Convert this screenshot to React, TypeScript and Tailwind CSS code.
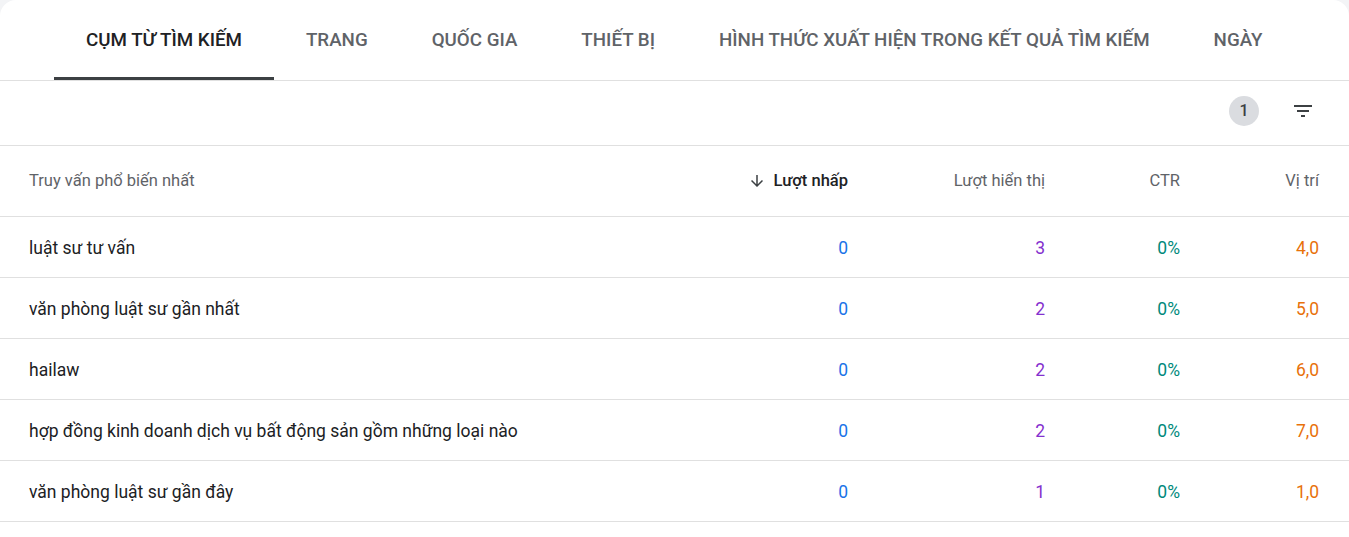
import React from "react";

const tabs = [
  "CỤM TỪ TÌM KIẾM",
  "TRANG",
  "QUỐC GIA",
  "THIẾT BỊ",
  "HÌNH THỨC XUẤT HIỆN TRONG KẾT QUẢ TÌM KIẾM",
  "NGÀY",
];

const rows = [
  ["luật sư tư vấn", "0", "3", "0%", "4,0"],
  ["văn phòng luật sư gần nhất", "0", "2", "0%", "5,0"],
  ["hailaw", "0", "2", "0%", "6,0"],
  ["hợp đồng kinh doanh dịch vụ bất động sản gồm những loại nào", "0", "2", "0%", "7,0"],
  ["văn phòng luật sư gần đây", "0", "1", "0%", "1,0"],
];

export default function App() {
  return (
    <div
      className="min-h-[537px] w-[1349px] bg-[#f3f4f6]"
      style={{ fontFamily: "Roboto, 'Noto Sans', sans-serif" }}
    >
      <div className="min-h-[537px] bg-white rounded-t-[16px]">
        <div className="flex h-[81px] border-b border-[#e0e0e0] pl-[54px]">
          {tabs.map((t, i) => (
            <div
              key={t}
              className={
                "relative flex items-center px-8 text-[18.75px] font-medium " +
                (i === 0 ? "text-[#202124]" : "text-[#5f6368]")
              }
            >
              <span>{t}</span>
              {i === 0 && (
                <div className="absolute left-0 right-0 bottom-0 h-[3px] bg-[#3c4043]" />
              )}
            </div>
          ))}
        </div>
        <div className="flex h-[65px] items-center justify-end border-b border-[#e0e0e0] pr-[34px] pb-[5px]">
          <div className="flex h-[30px] w-[30px] items-center justify-center rounded-full bg-[#dadce0] text-[16px] font-medium text-[#3c4043]">
            1
          </div>
          <div className="ml-[32px] flex h-[24px] w-[24px] items-center justify-center">
            <svg width="24" height="24" viewBox="0 0 24 24" fill="#3c4043">
              <path d="M10 18h4v-2h-4v2zM3 6v2h18V6H3zm3 7h12v-2H6v2z" />
            </svg>
          </div>
        </div>
        <div className="grid h-[71px] grid-cols-[1fr_197px_197px_135px_139px] items-center border-b border-[#e0e0e0] pl-[29px] pr-[30px] text-[16.5px] text-[#5f6368]">
          <div>Truy vấn phổ biến nhất</div>
          <div className="flex items-center justify-end font-medium text-[#202124]">
            <svg width="18" height="18" viewBox="0 0 24 24" fill="#3c4043" className="mr-[8px]">
              <path d="M20 12l-1.41-1.41L13 16.17V4h-2v12.17l-5.58-5.59L4 12l8 8 8-8z" />
            </svg>
            Lượt nhấp
          </div>
          <div className="text-right">Lượt hiển thị</div>
          <div className="text-right">CTR</div>
          <div className="text-right">Vị trí</div>
        </div>
        {rows.map((r) => (
          <div
            key={r[0]}
            className="grid h-[61px] grid-cols-[1fr_197px_197px_135px_139px] items-center border-b border-[#e0e0e0] pl-[29px] pr-[30px] pt-[3px] text-[17.5px]"
          >
            <div className="text-[#202124]">{r[0]}</div>
            <div className="text-right text-[#1a73e8]">{r[1]}</div>
            <div className="text-right text-[#8430ce]">{r[2]}</div>
            <div className="text-right text-[#00897b]">{r[3]}</div>
            <div className="text-right text-[#e8710a]">{r[4]}</div>
          </div>
        ))}
      </div>
    </div>
  );
}
